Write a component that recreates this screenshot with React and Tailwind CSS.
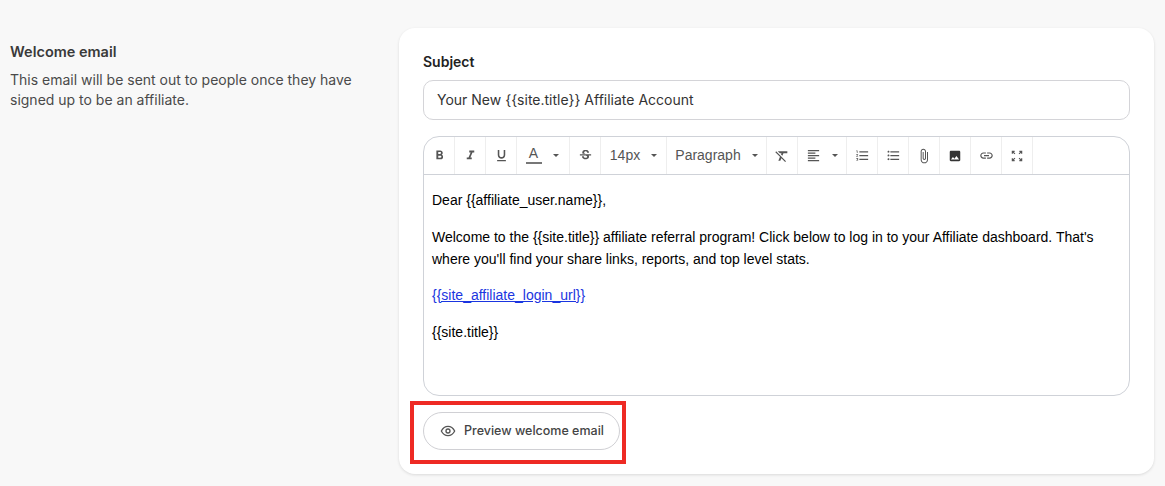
import React from "react";

const Icon = ({ children, size = 14, vb = "0 0 24 24" }) => (
  <svg width={size} height={size} viewBox={vb} fill="#555" aria-hidden="true">{children}</svg>
);

const Caret = () => (
  <svg width="6" height="3" viewBox="0 0 6 3" fill="#555" aria-hidden="true"><path d="M0 0h6L3 3z" /></svg>
);

const Cell = ({ w = "w-[31px]", children }) => (
  <div className={`${w} h-full flex items-center justify-center gap-[11px] border-r border-[#eeeeee] shrink-0 text-[#555] text-[14px]`}>
    {children}
  </div>
);

export default function App() {
  return (
    <div className="relative min-h-[486px] bg-[#f8f8f8] flex items-start pt-[28px] pl-[10px] pr-[11px] font-['Inter',sans-serif]">
      <div className="w-[389px] shrink-0 pt-[14px]">
        <h2 className="text-[14.5px] leading-[20px] font-semibold text-[#3a3a3a] font-['Inter',sans-serif]">Welcome email</h2>
        <p className="mt-[8px] w-[350px] text-[14px] leading-[20px] text-[#4a4a4a]">
          This email will be sent out to people once they have signed up to be an affiliate.
        </p>
      </div>

      <div className="flex-1 h-[446px] bg-white rounded-[16px] shadow-[0_1px_3px_rgba(0,0,0,0.12)] p-[24px]">
        <label className="block text-[14px] leading-[20px] font-semibold text-[#222]">Subject</label>
        <div className="mt-[8px] h-[40px] border border-[#d4d4d8] rounded-[10px] flex items-center pl-[13px] pr-[12px] pb-[1px] text-[14px] text-[#333]">
          Your New {"{{site.title}}"} Affiliate Account
        </div>

        <div className="mt-[16px] h-[260px] border border-[#cfd2d8] rounded-[16px] overflow-hidden">
          <div className="h-[38px] flex items-center border-b border-[#cfd2d8]">
            <Cell><Icon size={15}><path d="M15.6 10.79c.97-.67 1.65-1.77 1.65-2.79 0-2.26-1.75-4-4-4H7v14h7.04c2.09 0 3.71-1.7 3.71-3.79 0-1.52-.86-2.82-2.15-3.42zM10 6.5h3c.83 0 1.5.67 1.5 1.5s-.67 1.5-1.5 1.5h-3v-3zm3.5 9H10v-3h3.5c.83 0 1.5.67 1.5 1.5s-.67 1.5-1.5 1.5z" /></Icon></Cell>
            <Cell><Icon size={15}><path d="M10 4v3h2.21l-3.42 8H6v3h8v-3h-2.21l3.42-8H18V4z" /></Icon></Cell>
            <Cell><Icon size={15}><path d="M12 17c3.31 0 6-2.69 6-6V3h-2.5v8c0 1.93-1.57 3.5-3.5 3.5S8.5 12.93 8.5 11V3H6v8c0 3.31 2.69 6 6 6zm-7 2v2h14v-2H5z" /></Icon></Cell>
            <Cell w="w-[53px]">
              <span className="flex flex-col items-center w-[16px] -ml-[2px] -mt-[2px]">
                <span className="text-[14px] leading-[14px] text-[#555] font-['Liberation_Sans',sans-serif]">A</span>
                <span className="block w-[16px] h-[2px] mt-[2px] bg-[#777]" />
              </span>
              <Caret />
            </Cell>
            <Cell><Icon size={15}><path d="M7.24 8.75c-.26-.48-.39-1.03-.39-1.67 0-.61.13-1.16.4-1.67.26-.5.63-.93 1.11-1.29.48-.35 1.05-.63 1.7-.83.66-.19 1.39-.29 2.18-.29.81 0 1.54.11 2.21.34.66.22 1.23.54 1.69.94.47.4.83.88 1.08 1.43.25.55.38 1.15.38 1.81h-3.01c0-.31-.05-.59-.15-.85-.09-.27-.24-.49-.44-.68-.2-.19-.45-.33-.75-.44-.3-.1-.66-.16-1.06-.16-.39 0-.74.04-1.03.13-.29.09-.53.21-.72.36-.19.16-.34.34-.44.55-.1.21-.15.43-.15.66 0 .48.25.88.74 1.21.38.25.77.48 1.41.7H7.39c-.05-.08-.11-.17-.15-.25zM21 12v-2H3v2h9.62c.18.07.4.14.55.2.37.17.66.34.87.51.21.17.35.36.43.57.07.2.11.43.11.69 0 .23-.05.45-.14.66-.09.2-.23.38-.42.53-.19.15-.42.26-.71.35-.29.08-.63.13-1.01.13-.43 0-.83-.04-1.18-.13s-.66-.23-.91-.42c-.25-.19-.45-.44-.59-.75-.14-.31-.25-.76-.25-1.21H6.4c0 .55.08 1.13.24 1.58.16.45.37.85.65 1.21.28.35.6.66.98.92.37.26.78.48 1.22.65.44.17.9.3 1.38.39.48.08.96.13 1.44.13.8 0 1.53-.09 2.18-.28s1.21-.45 1.67-.79c.46-.34.82-.77 1.07-1.27s.38-1.07.38-1.71c0-.6-.1-1.14-.31-1.61-.05-.11-.11-.23-.17-.33H21z" /></Icon></Cell>
            <Cell w="w-[66px]"><span className="font-['Liberation_Sans',sans-serif] text-[#555]">14px</span><Caret /></Cell>
            <Cell w="w-[100px]"><span className="font-['Liberation_Sans',sans-serif] text-[#555]">Paragraph</span><Caret /></Cell>
            <Cell><Icon size={16}><path d="M3.27 5 2 6.27l6.97 6.97L6.5 19h3l1.57-3.66L16.73 21 18 19.73 3.55 5.27 3.27 5zM6 5v.18L8.82 8h2.4l-.72 1.68 2.1 2.1L14.21 8H20V5H6z" /></Icon></Cell>
            <Cell w="w-[49px]">
              <Icon size={15}><path d="M15 15H3v2h12v-2zm0-8H3v2h12V7zM3 13h18v-2H3v2zm0 8h18v-2H3v2zM3 3v2h18V3H3z" /></Icon>
              <Caret />
            </Cell>
            <Cell><Icon size={15}><path d="M2 17h2v.5H3v1h1v.5H2v1h3v-4H2v1zm1-9h1V4H2v1h1v3zm-1 3h1.8L2 13.1v.9h3v-1H3.2L5 10.9V10H2v1zm5-6v2h14V5H7zm0 14h14v-2H7v2zm0-6h14v-2H7v2z" /></Icon></Cell>
            <Cell><Icon size={15}><path d="M4 10.5c-.83 0-1.5.67-1.5 1.5s.67 1.5 1.5 1.5 1.5-.67 1.5-1.5-.67-1.5-1.5-1.5zm0-6c-.83 0-1.5.67-1.5 1.5S3.17 7.5 4 7.5 5.5 6.83 5.5 6 4.83 4.5 4 4.5zm0 12c-.83 0-1.5.68-1.5 1.5s.68 1.5 1.5 1.5 1.5-.68 1.5-1.5-.67-1.5-1.5-1.5zM7 19h14v-2H7v2zm0-6h14v-2H7v2zm0-8v2h14V5H7z" /></Icon></Cell>
            <Cell><Icon size={16}><path d="M16.5 6v11.5c0 2.21-1.79 4-4 4s-4-1.79-4-4V5c0-1.38 1.12-2.5 2.5-2.5s2.5 1.12 2.5 2.5v10.5c0 .55-.45 1-1 1s-1-.45-1-1V6H10v9.5c0 1.38 1.12 2.5 2.5 2.5s2.5-1.12 2.5-2.5V5c0-2.21-1.79-4-4-4S7 2.79 7 5v12.5c0 3.04 2.46 5.5 5.5 5.5s5.5-2.46 5.5-5.5V6h-1.5z" /></Icon></Cell>
            <Cell><Icon size={14}><path fill="#333" d="M21 19V5c0-1.1-.9-2-2-2H5c-1.1 0-2 .9-2 2v14c0 1.1.9 2 2 2h14c1.1 0 2-.9 2-2zM8.5 13.5l2.5 3.01L14.5 12l4.5 6H5l3.5-4.5z" /></Icon></Cell>
            <Cell><Icon size={15}><path d="M3.9 12c0-1.71 1.39-3.1 3.1-3.1h4V7H7c-2.76 0-5 2.24-5 5s2.24 5 5 5h4v-1.9H7c-1.71 0-3.1-1.39-3.1-3.1zM8 13h8v-2H8v2zm9-6h-4v1.9h4c1.71 0 3.1 1.39 3.1 3.1s-1.39 3.1-3.1 3.1h-4V17h4c2.76 0 5-2.24 5-5s-2.24-5-5-5z" /></Icon></Cell>
            <Cell><Icon size={14}><path d="M3 3h5v2H6.4l2.8 2.8-1.4 1.4L5 6.4V8H3V3zm13 0h5v5h-2V6.4l-2.8 2.8-1.4-1.4L17.6 5H16V3zM7.8 14.8l1.4 1.4L6.4 19H8v2H3v-5h2v1.6l2.8-2.8zm8.4 0 2.8 2.8V16h2v5h-5v-2h1.6l-2.8-2.8 1.4-1.4z" /></Icon></Cell>
          </div>
          <div className="px-[8px] pt-[14px] text-[14px] leading-[22px] text-black font-['Liberation_Sans',sans-serif]">
            <p>Dear {"{{affiliate_user.name}}"},</p>
            <p className="mt-[15px]">Welcome to the {"{{site.title}}"} affiliate referral program! Click below to log in to your Affiliate dashboard. That's where you'll find your share links, reports, and top level stats.</p>
            <p className="mt-[14px]"><a href="#" className="text-[#1a35e0] underline">{"{{site_affiliate_login_url}}"}</a></p>
            <p className="mt-[15px]">{"{{site.title}}"}</p>
          </div>
        </div>

        <button className="mt-[16px] h-[38px] w-[197px] rounded-full border border-[#d0d0d4] bg-white flex items-center justify-center gap-[8px] pt-[1px] pl-[1px] text-[12.5px] font-medium text-[#444]">
          <svg className="-mt-[1px]" width="16" height="16" viewBox="0 0 24 24" fill="none" stroke="#555" strokeWidth="2" strokeLinecap="round" strokeLinejoin="round" aria-hidden="true">
            <path d="M2 12s3.6-7 10-7 10 7 10 7-3.6 7-10 7-10-7-10-7z" />
            <circle cx="12" cy="12" r="3" />
          </svg>
          Preview welcome email
        </button>
      </div>

      <div className="absolute left-[410px] top-[401px] w-[216px] h-[63px] border-[4px] border-[#ee2a24] pointer-events-none" />
    </div>
  );
}
